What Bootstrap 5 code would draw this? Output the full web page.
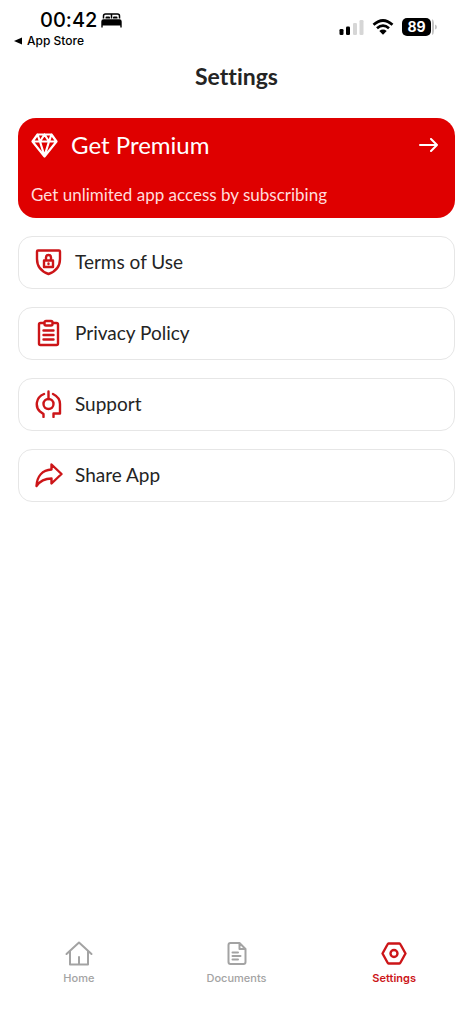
<!DOCTYPE html>
<html lang="en">
<head>
<meta charset="utf-8">
<meta name="viewport" content="width=device-width, initial-scale=1">
<title>Settings</title>
<link rel="stylesheet" href="https://cdn.jsdelivr.net/npm/bootstrap@5.3.0/dist/css/bootstrap.min.css">
<style>
  :root { --brand: #df0000; --accent: #cc1518; --ink: #242424; --muted: #a3a3a3; }
  body { font-family: Lato, "Open Sans", sans-serif; font-variant-ligatures: none; color: var(--ink); background: #fff; }
  svg { display: block; flex: none; }
  .line-icon { fill: none; stroke: currentColor; stroke-width: 2.4; stroke-linecap: round; stroke-linejoin: round; }
  .status-bar { font-family: Inter, sans-serif; color: #000; height: 54px; padding: 9px 36px 0 14px; }
  .clock { font-size: 20px; line-height: 22px; font-weight: 500; padding-left: 26px; gap: 4px; }
  .back-link { font-size: 12px; line-height: 20px; font-weight: 500; gap: 5px; color: #000; }
  .indicators { gap: 8px; padding-top: 8px; height: 28px; }
  .battery { gap: 1px; }
  .battery-level { width: 29px; height: 18px; border-radius: 5px; background: #000; color: #fff; font-size: 14px; line-height: 18px; font-weight: 700; }
  .page-title { font-size: 23px; line-height: 28px; font-weight: 700; margin: 8px 0 28px; }
  .page-main { padding: 0 18px; gap: 18px; }
  .premium { background: var(--brand); color: #fff; border-radius: 18px; height: 100px; padding: 12px 13px; }
  .premium-title { font-size: 24px; line-height: 30px; gap: 13px; }
  .premium-note { font-size: 17px; line-height: 22px; color: #ffdcdc; }
  .setting { border: 1px solid #e6e6e6; border-radius: 14px; height: 53px; padding: 0 16px 2px; gap: 12px; font-size: 19px; line-height: 28px; color: var(--ink); }
  .setting svg { color: var(--accent); }
  .tab-bar { font-family: Inter, sans-serif; font-size: 11px; line-height: 16px; font-weight: 500; padding-bottom: 38px; }
  .tab { color: var(--muted); gap: 4px; }
  .tab.current { color: var(--accent); font-weight: 600; }
</style>
</head>
<body>
<div class="min-vh-100 d-flex flex-column">
  <header class="status-bar d-flex justify-content-between">
    <div>
      <div class="clock d-flex align-items-center">
        <span>00:42</span>
        <svg width="21" height="15" viewBox="0 0 21 15" aria-hidden="true"><path d="M2.500 5.500V3Q2.500 1 4.500 1H16.500Q18.500 1 18.500 3V5.500M10.500 1V5.500" fill="none" stroke="#000" stroke-width="1.500"/><path d="M4.500 5.500V4.500Q4.500 3.500 5.500 3.500H8Q9 3.500 9 4.500V5.500ZM12 5.500V4.500Q12 3.500 13 3.500H15.500Q16.500 3.500 16.500 4.500V5.500Z"/><path d="M.3 8.500Q.3 6.200 2.500 6.200H18.500Q20.700 6.200 20.700 8.500V14.500H19.300V12.500H1.700V14.500H.3Z"/></svg>
      </div>
      <a href="#" class="back-link d-flex align-items-center text-decoration-none">
        <svg width="8" height="8" viewBox="0 0 8 8" aria-hidden="true"><path d="M8 .5V7.500L0 4Z"/></svg>App Store
      </a>
    </div>
    <div class="indicators d-flex align-items-center">
      <svg width="25" height="16" viewBox="0 0 25 16" aria-label="Signal strength"><rect x=".5" y="10" width="4" height="6" rx="1.300"/><rect x="7" y="7.500" width="4" height="8.500" rx="1.300"/><rect x="14" y="4" width="4" height="12" rx="1.300" fill="#d6d6d6"/><rect x="20.500" y="1" width="4" height="15" rx="1.300" fill="#d6d6d6"/></svg>
      <svg width="22" height="16" viewBox="0 0 22 16" aria-label="Wi-Fi"><path d="M1.500 5.800Q11-2.800 20.500 5.800M5 9.300Q11 4 17 9.300" fill="none" stroke="#000" stroke-width="2.700"/><path d="M7.300 11.900Q11 9 14.700 11.900L11 15.700Z"/></svg>
      <div class="battery d-flex align-items-center">
        <span class="battery-level text-center">89</span>
        <svg width="5" height="16" viewBox="0 0 5 16" aria-hidden="true"><path d="M0 0Q2 1 2 4V12Q2 15 0 16ZM3 5.500Q5 6 5 8T3 10.500Z" fill="#c4c4c4"/></svg>
      </div>
    </div>
  </header>

  <h1 class="page-title text-center">Settings</h1>

  <main class="page-main d-flex flex-column flex-grow-1">
    <a href="#" class="premium d-flex flex-column justify-content-between text-decoration-none">
      <span class="premium-title d-flex align-items-center">
        <svg class="line-icon" width="27" height="25" viewBox="0 0 27 25" aria-hidden="true"><path d="M6.500 1.500H20.500L25.500 8.500L13.500 23.500L1.500 8.500ZM1.500 8.500H25.500M13.500 1.500L9 8.500L13.500 23L18 8.500L13.500 1.500M6.500 1.500L9 8.500M20.500 1.500L18 8.500" stroke-width="2.200"/></svg>
        <span class="flex-grow-1">Get Premium</span>
        <svg class="line-icon me-1" width="19" height="14" viewBox="0 0 19 14" aria-hidden="true"><path d="M1 7H18M12 1L18 7L12 13" stroke-width="2"/></svg>
      </span>
      <span class="premium-note">Get unlimited app access by subscribing</span>
    </a>
    <a href="#" class="setting d-flex align-items-center text-decoration-none">
      <svg class="line-icon" width="28" height="28" viewBox="0 0 28 28" aria-hidden="true"><path d="M3 2.500H24Q25 2.500 25 3.500V11C25 19 20.500 23.500 13.500 26C6.500 23.500 2 19 2 11V3.500Q2 2.500 3 2.500Z"/><path d="M9 12.500H18V19H9ZM11 12V9.500A2.500 2.500 0 0 1 16 9.500V12M13.500 15.500V16"/></svg>
      Terms of Use
    </a>
    <a href="#" class="setting d-flex align-items-center text-decoration-none">
      <svg class="line-icon" width="28" height="28" viewBox="0 0 28 28" aria-hidden="true"><path d="M9 4H5.500Q4 4 4 5.500V24.500Q4 26 5.500 26H21.500Q23 26 23 24.500V5.500Q23 4 21.500 4H18"/><rect x="9.500" y="2" width="8" height="4.500" rx="1.500"/><path d="M8.500 11.500H18.500M8.500 16H18.500M8.500 20.500H18.500"/></svg>
      Privacy Policy
    </a>
    <a href="#" class="setting d-flex align-items-center text-decoration-none">
      <svg class="line-icon" width="28" height="28" viewBox="0 0 28 28" aria-hidden="true"><circle cx="13.500" cy="14" r="5"/><path d="M13.500 1.500V9M9 4C.5 7.500 0 17 5 21.500L8.500 24V27M18 4Q25 7.500 25 14V23.500H18.500V27"/></svg>
      Support
    </a>
    <a href="#" class="setting d-flex align-items-center text-decoration-none">
      <svg class="line-icon" width="28" height="28" viewBox="0 0 28 28" aria-hidden="true"><path d="M16.500 3.500L26.500 13L16.500 22.500V17.500C9.500 17.500 5 20 1.500 25C2 15 7.500 9 16.500 8.500Z"/></svg>
      Share App
    </a>
  </main>

  <nav class="tab-bar row g-0" aria-label="Main">
    <a href="#" class="tab col d-flex flex-column align-items-center text-decoration-none">
      <svg class="line-icon" width="28" height="26" viewBox="0 0 28 26" aria-hidden="true"><path d="M1.500 14L14 2.500L26.500 14M5 11V24.500H23V11M14 17V24" stroke-width="2"/></svg>
      Home
    </a>
    <a href="#" class="tab col d-flex flex-column align-items-center text-decoration-none">
      <svg class="line-icon" width="20" height="26" viewBox="0 0 20 26" aria-hidden="true"><path d="M3.500 3H12.500L18.500 9V22Q18.500 24 16.500 24H3.500Q1.500 24 1.500 22V5Q1.500 3 3.500 3ZM12.500 3.500V9H18M5.500 12.500H11M5.500 16H13.500M5.500 19.500H11" stroke-width="2"/></svg>
      Documents
    </a>
    <a href="#" class="tab current col d-flex flex-column align-items-center text-decoration-none" aria-current="page">
      <svg class="line-icon" width="26" height="26" viewBox="0 0 26 26" aria-hidden="true"><path d="M7.500 3.500H18.500Q19 3.500 19.500 4.500L24.500 13.500L19.500 22.500Q19 23.500 18.500 23.500H7.500Q7 23.500 6.500 22.500L1.500 13.500L6.500 4.500Q7 3.500 7.500 3.500Z"/><circle cx="13" cy="13.500" r="3.500"/></svg>
      Settings
    </a>
  </nav>
</div>
<script src="https://cdn.jsdelivr.net/npm/bootstrap@5.3.0/dist/js/bootstrap.bundle.min.js"></script>
</body>
</html>
